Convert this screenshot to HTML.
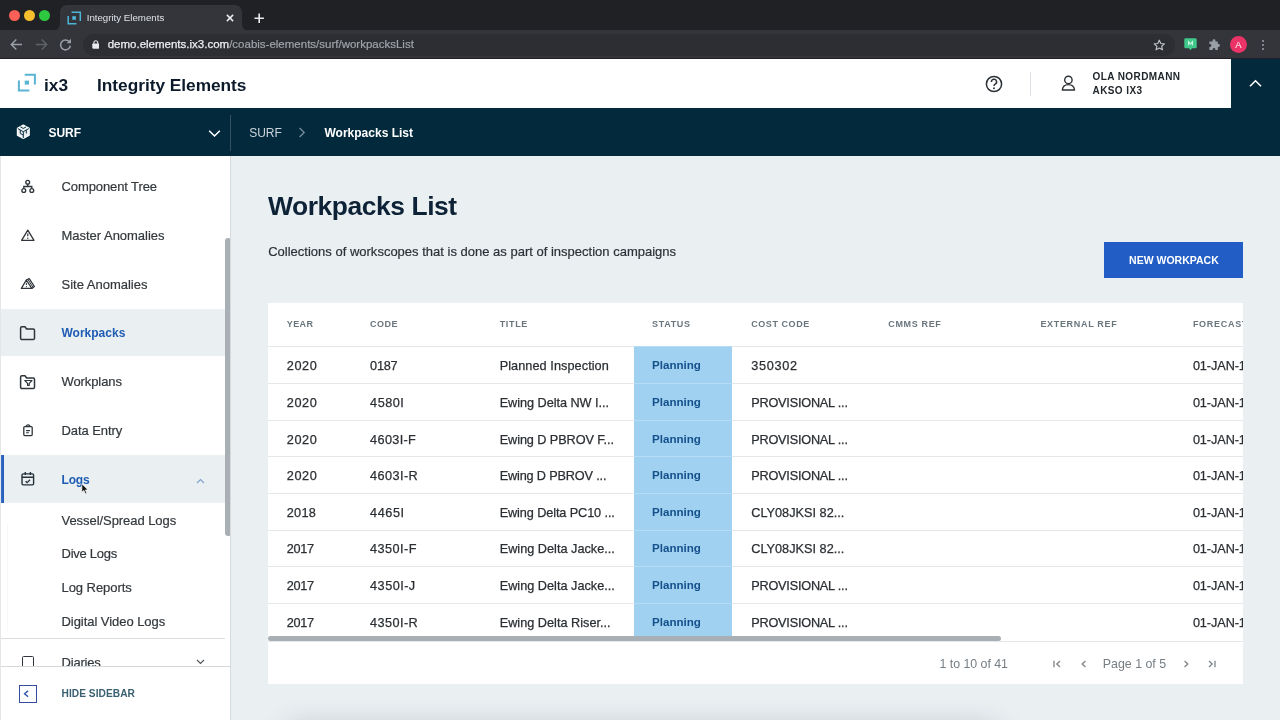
<!DOCTYPE html>
<html>
<head>
<meta charset="utf-8">
<title>Integrity Elements</title>
<style>
*{box-sizing:border-box;margin:0;padding:0}
html,body{width:1280px;height:720px;overflow:hidden;background:#eaeff2;font-family:"Liberation Sans",sans-serif;color:#2b2f33}
.abs{position:absolute}
#root{position:relative;width:1280px;height:720px;overflow:hidden;will-change:transform}
.t{position:absolute;white-space:nowrap;line-height:1}
/* chrome */
#titlebar{left:0;top:0;width:1280px;height:30px;background:#1f2125}
#tab{left:60px;top:5px;width:182px;height:26px;background:#33353a;border-radius:7px 7px 0 0}
#toolbar{left:0;top:30px;width:1280px;height:28px;background:#33353a}
#urlpill{left:83px;top:33.5px;width:1092px;height:22px;border-radius:11px;background:#2c2e33}
#chromeline{left:0;top:57.5px;width:1280px;height:1px;background:#1f2023}
/* app header */
#hdr{left:0;top:59px;width:1231px;height:49px;background:#fff}
#hdrdark{left:1231px;top:59px;width:49px;height:49px;background:#022a3c}
#nav{left:0;top:107.6px;width:1280px;height:48.1px;background:#022a3c}
/* sidebar */
#side{left:0;top:156px;width:231px;height:564px;background:#fff;overflow:hidden;border-right:1px solid #d6dadd}
.si{position:absolute;left:61.5px;font-size:13px;color:#33383c;white-space:nowrap;line-height:16px;letter-spacing:.15px}
.act{position:absolute;left:0;width:224.5px;background:#eaeff2}
/* content */
#card{left:268px;top:302px;width:975px;height:382px;overflow:hidden}
.th{font-size:9px;font-weight:bold;color:#69757d}
.td{font-size:12.7px;color:#2b2f33;-webkit-text-stroke:.25px #2b2f33}
.pl{font-size:11.6px;font-weight:bold;color:#14508c}
.pg{font-size:12.4px;color:#767e84}
.rl{left:0;width:975px;height:1px;background:#e5e8eb}
.st{left:365.7px;width:98.8px;background:#a1d1f0}
</style>
</head>
<body>
<div id="root">
<!-- ===== browser chrome ===== -->
<div id="titlebar" class="abs"></div>
<div class="abs" style="left:8.5px;top:9.5px;width:11px;height:11px;border-radius:50%;background:#fe5f57"></div>
<div class="abs" style="left:23.7px;top:9.5px;width:11px;height:11px;border-radius:50%;background:#f6bd2e"></div>
<div class="abs" style="left:39px;top:9.5px;width:11px;height:11px;border-radius:50%;background:#2dc840"></div>
<div id="tab" class="abs"></div>
<svg class="abs" style="left:52px;top:23px" width="8" height="8" viewBox="0 0 8 8"><path d="M8 0 V8 H0 C5 8 8 5 8 0Z" fill="#33353a"/></svg>
<svg class="abs" style="left:242px;top:23px" width="8" height="8" viewBox="0 0 8 8"><path d="M0 0 V8 H8 C3 8 0 5 0 0Z" fill="#33353a"/></svg>
<svg class="abs" style="left:67px;top:11px" width="15" height="14" viewBox="0 0 15 14"><g fill="none" stroke="#4db5d8" stroke-width="1.5"><path d="M4.5 1.2 H13.3 V10"/><path d="M1.2 5 V12.8 H9.5"/></g><rect x="5.3" y="5.2" width="3.6" height="3.6" fill="#4db5d8"/></svg>
<div class="t" style="left:86.7px;top:13.2px;font-size:9.7px;color:#dee1e6;letter-spacing:0">Integrity Elements</div>
<svg class="abs" style="left:225.7px;top:14.1px" width="8" height="8" viewBox="0 0 9 9"><path d="M1 1 L8 8 M8 1 L1 8" stroke="#e8eaed" stroke-width="1.7" fill="none"/></svg>
<svg class="abs" style="left:253.6px;top:12.9px" width="10.4" height="10.4" viewBox="0 0 11 11"><path d="M5.5 0.5 V10.5 M0.5 5.5 H10.5" stroke="#e8eaed" stroke-width="1.7" fill="none"/></svg>
<div id="toolbar" class="abs"></div>
<svg class="abs" style="left:10px;top:38px" width="13" height="13" viewBox="0 0 13 13"><path d="M12 6.5 H1.5 M6.3 1.5 L1.3 6.5 L6.3 11.5" stroke="#9aa0a6" stroke-width="1.5" fill="none"/></svg>
<svg class="abs" style="left:35px;top:38px" width="13" height="13" viewBox="0 0 13 13"><path d="M1 6.5 H11.5 M6.7 1.5 L11.7 6.5 L6.7 11.5" stroke="#5f6368" stroke-width="1.5" fill="none"/></svg>
<svg class="abs" style="left:58.5px;top:38px" width="13" height="13" viewBox="0 0 13 13"><path d="M10.6 4.2 A4.9 4.9 0 1 0 11.4 7.6" stroke="#9aa0a6" stroke-width="1.5" fill="none"/><path d="M7.6 5.2 H12 V0.8 Z" fill="#9aa0a6"/></svg>
<div id="urlpill" class="abs"></div>
<svg class="abs" style="left:91.8px;top:40.3px" width="7.6" height="9" viewBox="0 0 8 11" preserveAspectRatio="none"><rect x="0.3" y="4.2" width="7.4" height="6.4" rx="1" fill="#e8eaed"/><path d="M2 4.5 V3 A2 2 0 0 1 6 3 V4.5" stroke="#e8eaed" stroke-width="1.2" fill="none"/></svg>
<div class="t" style="left:107.7px;top:38.8px;font-size:11.5px;color:#a0a4a9;letter-spacing:0;-webkit-text-stroke:.2px #a0a4a9"><span style="color:#eceef0;-webkit-text-stroke:.25px #eceef0">demo.elements.ix3.com</span>/coabis-elements/surf/workpacksList</div>
<svg class="abs" style="left:1153.1px;top:39px" width="12.6" height="11.7" viewBox="0 0 14 13"><path d="M7 1.3 L8.7 5 L12.7 5.4 L9.7 8.1 L10.6 12 L7 10 L3.4 12 L4.3 8.1 L1.3 5.4 L5.3 5 Z" fill="none" stroke="#bdc1c6" stroke-width="1.3" stroke-linejoin="round"/></svg>
<svg class="abs" style="left:1183.5px;top:38.2px" width="13" height="13" viewBox="0 0 13 13"><path d="M1.6 0.3 H11.4 A1.3 1.3 0 0 1 12.7 1.6 V9 A1.3 1.3 0 0 1 11.4 10.3 H8 L6.5 12.2 L5 10.3 H1.6 A1.3 1.3 0 0 1 0.3 9 V1.6 A1.3 1.3 0 0 1 1.6 0.3Z" fill="#41c98c"/><path d="M4.6 7.2 V3.7 L6.5 6 L8.4 3.7 V7.2" fill="none" stroke="#d8f5e8" stroke-width="1.1"/></svg>
<svg class="abs" style="left:1208px;top:38.5px" width="12" height="12" viewBox="0 0 12 12"><path d="M4.6 1.6 A1.4 1.4 0 0 1 7.4 1.6 V2.4 H9.8 V5 H10.5 A1.45 1.45 0 0 1 10.5 7.9 H9.8 V10.9 H7.3 V10.2 A1.3 1.3 0 0 0 4.7 10.2 V10.9 H1.4 V7.9 H2 A1.4 1.4 0 0 0 2 5.1 H1.4 V2.4 H4.6 Z" fill="#9aa0a6"/></svg>
<div class="abs" style="left:1229.7px;top:35.8px;width:17.6px;height:17.6px;border-radius:50%;background:#ea3366"></div>
<div class="t" style="left:1234.5px;top:40.2px;font-size:9.5px;color:#fff;width:8px;text-align:center">A</div>
<div class="abs" style="left:1261.6px;top:39.8px;width:2.4px;height:2.4px;border-radius:50%;background:#9aa0a6;box-shadow:0 4px 0 #9aa0a6,0 8px 0 #9aa0a6"></div>
<div id="chromeline" class="abs"></div>

<!-- ===== app header ===== -->
<div id="hdr" class="abs"></div>
<div id="hdrdark" class="abs"></div>
<svg class="abs" style="left:17px;top:73px" width="20" height="19" viewBox="0 0 20 19"><g fill="none" stroke="#5ab4d4" stroke-width="2"><path d="M7.7 1.7 H17.9 V11.6"/><path d="M1.9 7.6 V17.5 H12.4"/></g><rect x="7.7" y="7.6" width="4.3" height="4" fill="#5ab4d4"/></svg>
<div class="t" style="left:44px;top:76.9px;font-size:17.3px;font-weight:bold;color:#0c1a2b">ix3</div>
<div class="t" style="left:97px;top:76.9px;font-size:17.3px;font-weight:bold;color:#0c1a2b;letter-spacing:-.02px">Integrity Elements</div>
<svg class="abs" style="left:984px;top:73.5px" width="20" height="20" viewBox="0 0 20 20"><circle cx="10" cy="10" r="7.6" fill="none" stroke="#2d3237" stroke-width="1.5"/><path d="M7.4 8 A2.6 2.6 0 1 1 11.2 10.2 C10.3 10.7 10 11.1 10 12.1" fill="none" stroke="#2d3237" stroke-width="1.5"/><circle cx="10" cy="14.3" r="0.95" fill="#2d3237"/></svg>
<div class="abs" style="left:1030.4px;top:72px;width:1px;height:23.5px;background:#dcdfe3"></div>
<svg class="abs" style="left:1060px;top:74px" width="17" height="18" viewBox="0 0 17 18"><circle cx="8.4" cy="5.9" r="3.7" fill="none" stroke="#2d3237" stroke-width="1.4"/><path d="M2.3 16 C2.6 12.6 4.6 10.6 8.4 10.6 C12.2 10.6 14.2 12.6 14.5 16 Z" fill="none" stroke="#2d3237" stroke-width="1.4" stroke-linejoin="round"/></svg>
<div class="t" style="left:1092.5px;top:72.4px;font-size:10px;font-weight:bold;color:#22272b;letter-spacing:.42px">OLA NORDMANN</div>
<div class="t" style="left:1092.5px;top:86.1px;font-size:10px;font-weight:bold;color:#22272b;letter-spacing:.42px">AKSO IX3</div>
<svg class="abs" style="left:1249px;top:79px" width="13" height="9" viewBox="0 0 13 9"><path d="M1 7.2 L6.5 1.8 L12 7.2" fill="none" stroke="#fff" stroke-width="1.6"/></svg>
<div id="nav" class="abs"></div>
<svg class="abs" style="left:16.3px;top:124.2px" width="14.6" height="15.5" viewBox="0 0 15 16"><path d="M7.5 1 L13.6 4.5 V11.5 L7.5 15 L1.4 11.5 V4.5 Z" fill="#e9eef1" stroke="#fff" stroke-width="1.2" stroke-linejoin="round"/><path d="M1.8 4.7 L7.5 8 L13.2 4.7 M7.5 8 V14.6 M4.4 6.3 V9.8 L7.5 11.4 M10.6 6.3 V9.8 M4.5 2.9 L7.5 4.6 L10.5 2.9" fill="none" stroke="#022a3c" stroke-width="1"/></svg>
<div class="t" style="left:48.4px;top:126.8px;font-size:12px;font-weight:bold;color:#fff">SURF</div>
<svg class="abs" style="left:207.5px;top:128.5px" width="13" height="9" viewBox="0 0 13 9"><path d="M1.2 1.8 L6.5 7 L11.8 1.8" fill="none" stroke="#fff" stroke-width="1.6"/></svg>
<div class="abs" style="left:229.5px;top:114.5px;width:1.3px;height:36px;background:#35505f"></div>
<div class="t" style="left:249.2px;top:126.8px;font-size:12px;color:#ccd5db">SURF</div>
<svg class="abs" style="left:298px;top:127px" width="8" height="11" viewBox="0 0 8 11"><path d="M1.6 1 L6.2 5.5 L1.6 10" fill="none" stroke="#7d929e" stroke-width="1.2"/></svg>
<div class="t" style="left:324.5px;top:126.8px;font-size:12px;font-weight:bold;color:#fff">Workpacks List</div>

<!-- ===== sidebar ===== -->
<div id="side" class="abs">
<div class="abs" style="left:6.5px;top:369px;width:1px;height:106px;background:#f6f7f9"></div>
<div class="act" style="top:153px;height:47px"></div>
<div class="act" style="top:299px;height:48px"></div>
<div class="abs" style="left:0;top:299px;width:3.8px;height:48px;background:linear-gradient(90deg,#3f7ad2,#2458b6)"></div>
<div class="t" style="left:61.5px;top:24.25px;font-size:13px;color:#33383c;-webkit-text-stroke:.2px #33383c;letter-spacing:-0.1px">Component Tree</div>
<div class="t" style="left:61.5px;top:73.0px;font-size:13px;color:#33383c;-webkit-text-stroke:.2px #33383c;letter-spacing:-0.02px">Master Anomalies</div>
<div class="t" style="left:61.5px;top:121.75px;font-size:13px;color:#33383c;-webkit-text-stroke:.2px #33383c">Site Anomalies</div>
<div class="t" style="left:61.5px;top:219.25px;font-size:13px;color:#33383c;-webkit-text-stroke:.2px #33383c;letter-spacing:-0.09px">Workplans</div>
<div class="t" style="left:61.5px;top:268.0px;font-size:13px;color:#33383c;-webkit-text-stroke:.2px #33383c;letter-spacing:-0.07px">Data Entry</div>
<div class="t" style="left:61.5px;top:357.6px;font-size:13px;color:#33383c;-webkit-text-stroke:.2px #33383c;letter-spacing:-0.055px">Vessel/Spread Logs</div>
<div class="t" style="left:61.5px;top:391.25px;font-size:13px;color:#33383c;-webkit-text-stroke:.2px #33383c;letter-spacing:-0.26px">Dive Logs</div>
<div class="t" style="left:61.5px;top:424.75px;font-size:13px;color:#33383c;-webkit-text-stroke:.2px #33383c;letter-spacing:-0.06px">Log Reports</div>
<div class="t" style="left:61.5px;top:458.5px;font-size:13px;color:#33383c;-webkit-text-stroke:.2px #33383c;letter-spacing:-0.05px">Digital Video Logs</div>
<div class="t" style="left:61.5px;top:499.6px;font-size:13px;color:#33383c;-webkit-text-stroke:.2px #33383c;letter-spacing:-0.2px">Diaries</div>
<div class="t" style="left:61.5px;top:171.34px;font-size:12px;font-weight:bold;color:#1f5cb4">Workpacks</div>
<div class="t" style="left:61.5px;top:317.59px;font-size:12px;font-weight:bold;color:#1f5cb4;letter-spacing:-.2px">Logs</div>
<svg class="abs" style="left:20px;top:23px" width="16" height="16" viewBox="0 0 16 16"><g fill="none" stroke="#2f353a" stroke-width="1.35"><circle cx="7.7" cy="3.3" r="1.9"/><circle cx="3.8" cy="11.5" r="1.9"/><circle cx="11.8" cy="11.5" r="1.9"/><path d="M7.7 5.2 V7.5 M3.8 9.6 V7.5 H11.8 V9.6"/></g></svg>
<svg class="abs" style="left:20px;top:72px" width="16" height="14" viewBox="0 0 16 14"><path d="M7.8 2.2 L14 12.3 H1.6 Z" fill="none" stroke="#2f353a" stroke-width="1.3" stroke-linejoin="round"/><path d="M7.8 5.6 V8.3" stroke="#2f353a" stroke-width="1.2"/><circle cx="7.8" cy="10.2" r="0.7" fill="#2f353a"/></svg>
<svg class="abs" style="left:20px;top:121px" width="16" height="14" viewBox="0 0 16 14"><g fill="none" stroke="#2f353a" stroke-width="1.3" stroke-linejoin="round"><path d="M6.3 3 L11.8 11.4 H1.4 Z"/><path d="M6.3 3 L9.2 1.6 L14.4 9.5 L11.8 11.4"/><path d="M7.9 2.4 L13 10.3" stroke-width="1"/></g><path d="M6.4 5.8 V8" stroke="#2f353a" stroke-width="1"/><circle cx="6.4" cy="9.6" r="0.6" fill="#2f353a"/></svg>
<svg class="abs" style="left:18.9px;top:169.2px" width="17" height="16" viewBox="0 0 17 16"><path d="M1.6 3 A1.3 1.3 0 0 1 2.9 1.7 H6 L7.6 4 H14.2 A1.3 1.3 0 0 1 15.5 5.3 V13.2 A1.3 1.3 0 0 1 14.2 14.5 H2.9 A1.3 1.3 0 0 1 1.6 13.2 Z" fill="none" stroke="#2f353a" stroke-width="1.5" stroke-linejoin="round"/></svg>
<svg class="abs" style="left:18.9px;top:218px" width="17" height="16" viewBox="0 0 17 16"><path d="M1.6 3 A1.3 1.3 0 0 1 2.9 1.7 H6 L7.6 4 H14.2 A1.3 1.3 0 0 1 15.5 5.3 V13.2 A1.3 1.3 0 0 1 14.2 14.5 H2.9 A1.3 1.3 0 0 1 1.6 13.2 Z" fill="none" stroke="#2f353a" stroke-width="1.5" stroke-linejoin="round"/><path d="M5.8 6.5 H13 L10.2 9.3 V11.5 H8.6 V9.3 Z" fill="none" stroke="#2f353a" stroke-width="1.2" stroke-linejoin="round"/></svg>
<svg class="abs" style="left:22px;top:267.5px" width="12" height="14" viewBox="0 0 12 14"><rect x="1.8" y="2.6" width="8.4" height="9" rx="1" fill="none" stroke="#2f353a" stroke-width="1.3"/><path d="M4.2 2.8 A1.9 1.9 0 0 1 8 2.8" fill="none" stroke="#2f353a" stroke-width="1.3"/><path d="M4.1 6.6 H7.9 M4.1 8.7 H6.9" stroke="#2f353a" stroke-width="1.1"/></svg>
<svg class="abs" style="left:20px;top:315px" width="16" height="16" viewBox="0 0 16 16"><g fill="none" stroke="#25323d" stroke-width="1.4"><rect x="2" y="2.9" width="11.6" height="11" rx="1.3"/><path d="M2 6.2 H13.6 M5.3 0.9 V4 M10.4 0.9 V4"/><path d="M5.6 10.2 L7.1 11.6 L10 8.8" stroke-width="1.3"/></g></svg>
<svg class="abs" style="left:195.5px;top:322px" width="9" height="6" viewBox="0 0 9 6"><path d="M1 5 L4.5 1.5 L8 5" fill="none" stroke="#7fa0cf" stroke-width="1.1"/></svg>
<svg class="abs" style="left:195.5px;top:502.5px" width="9" height="6" viewBox="0 0 9 6"><path d="M1 1 L4.5 4.5 L8 1" fill="none" stroke="#4a5157" stroke-width="1.1"/></svg>
<div class="abs" style="left:0;top:481.6px;width:224.5px;height:1px;background:#d9dde0"></div>
<div class="abs" style="left:22px;top:500px;width:11.6px;height:14px;border:1.3px solid #2f353a;border-radius:1.5px"></div>
<div class="abs" style="left:224.5px;top:81.5px;width:6px;height:298px;border-radius:3px;background:#a8b0b6"></div>
<div class="abs" style="left:0;top:509.5px;width:231px;height:55px;background:#fff;border-top:1px solid #d5d9dc"></div>
<div class="abs" style="left:18.9px;top:529px;width:18px;height:18px;border:1.5px solid #344da0"></div>
<svg class="abs" style="left:22.9px;top:534.3px" width="6.8" height="7.6" viewBox="0 0 8 9"><path d="M6 1 L1.8 4.5 L6 8" fill="none" stroke="#2e55ad" stroke-width="1.7"/></svg>
<div class="t" style="left:61.5px;top:532.57px;font-size:10.2px;font-weight:bold;color:#3b6072;letter-spacing:.04px">HIDE SIDEBAR</div>
<div class="abs" style="left:0;top:0;width:1px;height:564px;background:#e4e6e8"></div>
<svg class="abs" style="left:80.8px;top:327px" width="8.4" height="11.8" viewBox="0 0 10 14"><path d="M1 0.8 V11 L3.5 8.8 L5.2 12.8 L6.9 12.1 L5.2 8.2 H8.4 Z" fill="#111" stroke="#fff" stroke-width="0.8"/></svg>
</div>

<!-- ===== content ===== -->
<div class="t" style="left:268px;top:192.85px;font-size:26.4px;font-weight:bold;color:#0d2236;letter-spacing:-.42px">Workpacks List</div>
<div class="t" style="left:268.2px;top:244.8px;font-size:13px;color:#2b3137;letter-spacing:.005px;-webkit-text-stroke:.2px #2b3137">Collections of workscopes that is done as part of inspection campaigns</div>
<div class="abs" style="left:1104.3px;top:242.4px;width:138.7px;height:36.1px;background:#215dc4"></div>
<div class="t" style="left:1129.1px;top:254.86px;font-size:10.5px;font-weight:bold;color:#fff;letter-spacing:0">NEW WORKPACK</div>
<div class="abs" style="left:288px;top:730px;width:708px;height:30px;border-radius:6px;background:#888;box-shadow:0 0 30px 0 rgba(40,45,70,.3)"></div>
<div id="card" class="abs">
<div class="abs" style="left:0;top:.5px;width:975px;height:381.5px;background:#fff"></div>
<div class="t th" style="left:18.75px;top:17.88px;letter-spacing:0.41px">YEAR</div>
<div class="t th" style="left:102.10px;top:17.88px;letter-spacing:0.49px">CODE</div>
<div class="t th" style="left:231.70px;top:17.88px;letter-spacing:0.65px">TITLE</div>
<div class="t th" style="left:384.10px;top:17.88px;letter-spacing:0.65px">STATUS</div>
<div class="t th" style="left:483.25px;top:17.88px;letter-spacing:0.56px">COST CODE</div>
<div class="t th" style="left:620.30px;top:17.88px;letter-spacing:0.64px">CMMS REF</div>
<div class="t th" style="left:772.40px;top:17.88px;letter-spacing:0.68px">EXTERNAL REF</div>
<div class="t th" style="left:924.90px;top:17.88px;letter-spacing:0.71px">FORECAST</div>
<div class="abs rl" style="top:43.75px"></div>
<div class="abs st" style="top:43.75px;height:37.15px;border-top:1px solid #b6dbf4"></div>
<div class="t td" style="left:18.75px;top:58.00px;letter-spacing:0.59px">2020</div>
<div class="t td" style="left:102.10px;top:58.00px;letter-spacing:-0.24px">0187</div>
<div class="t td" style="left:231.70px;top:58.00px;letter-spacing:0.07px">Planned Inspection</div>
<div class="t td" style="left:483.25px;top:58.00px;letter-spacing:0.69px">350302</div>
<div class="t pl" style="left:384.10px;top:57.00px;letter-spacing:-0.04px">Planning</div>
<div class="t td" style="left:924.90px;top:58.00px;letter-spacing:-0.08px">01-JAN-19</div>
<div class="abs rl" style="top:80.90px"></div>
<div class="abs st" style="top:80.90px;height:36.80px;border-top:1px solid #b6dbf4"></div>
<div class="t td" style="left:18.75px;top:95.00px;letter-spacing:0.59px">2020</div>
<div class="t td" style="left:102.10px;top:95.00px;letter-spacing:0.51px">4580I</div>
<div class="t td" style="left:231.70px;top:95.00px;letter-spacing:-0.04px">Ewing Delta NW I...</div>
<div class="t td" style="left:483.25px;top:95.00px;letter-spacing:-0.21px">PROVISIONAL ...</div>
<div class="t pl" style="left:384.10px;top:94.00px;letter-spacing:-0.04px">Planning</div>
<div class="t td" style="left:924.90px;top:95.00px;letter-spacing:-0.08px">01-JAN-19</div>
<div class="abs rl" style="top:117.70px"></div>
<div class="abs st" style="top:117.70px;height:36.70px;border-top:1px solid #b6dbf4"></div>
<div class="t td" style="left:18.75px;top:132.00px;letter-spacing:0.59px">2020</div>
<div class="t td" style="left:102.10px;top:132.00px;letter-spacing:0.34px">4603I-F</div>
<div class="t td" style="left:231.70px;top:132.00px;letter-spacing:-0.08px">Ewing D PBROV F...</div>
<div class="t td" style="left:483.25px;top:132.00px;letter-spacing:-0.21px">PROVISIONAL ...</div>
<div class="t pl" style="left:384.10px;top:131.00px;letter-spacing:-0.04px">Planning</div>
<div class="t td" style="left:924.90px;top:132.00px;letter-spacing:-0.08px">01-JAN-19</div>
<div class="abs rl" style="top:154.40px"></div>
<div class="abs st" style="top:154.40px;height:36.70px;border-top:1px solid #b6dbf4"></div>
<div class="t td" style="left:18.75px;top:168.00px;letter-spacing:0.59px">2020</div>
<div class="t td" style="left:102.10px;top:168.00px;letter-spacing:0.41px">4603I-R</div>
<div class="t td" style="left:231.70px;top:168.00px;letter-spacing:-0.16px">Ewing D PBROV ...</div>
<div class="t td" style="left:483.25px;top:168.00px;letter-spacing:-0.21px">PROVISIONAL ...</div>
<div class="t pl" style="left:384.10px;top:167.00px;letter-spacing:-0.04px">Planning</div>
<div class="t td" style="left:924.90px;top:168.00px;letter-spacing:-0.08px">01-JAN-19</div>
<div class="abs rl" style="top:191.10px"></div>
<div class="abs st" style="top:191.10px;height:36.50px;border-top:1px solid #b6dbf4"></div>
<div class="t td" style="left:18.75px;top:205.00px;letter-spacing:0.26px">2018</div>
<div class="t td" style="left:102.10px;top:205.00px;letter-spacing:0.54px">4465I</div>
<div class="t td" style="left:231.70px;top:205.00px;letter-spacing:-0.10px">Ewing Delta PC10 ...</div>
<div class="t td" style="left:483.25px;top:205.00px;letter-spacing:0.02px">CLY08JKSI 82...</div>
<div class="t pl" style="left:384.10px;top:204.00px;letter-spacing:-0.04px">Planning</div>
<div class="t td" style="left:924.90px;top:205.00px;letter-spacing:-0.08px">01-JAN-19</div>
<div class="abs rl" style="top:227.60px"></div>
<div class="abs st" style="top:227.60px;height:36.50px;border-top:1px solid #b6dbf4"></div>
<div class="t td" style="left:18.75px;top:241.00px;letter-spacing:-0.31px">2017</div>
<div class="t td" style="left:102.10px;top:241.00px;letter-spacing:0.43px">4350I-F</div>
<div class="t td" style="left:231.70px;top:241.00px;letter-spacing:0.01px">Ewing Delta Jacke...</div>
<div class="t td" style="left:483.25px;top:241.00px;letter-spacing:0.02px">CLY08JKSI 82...</div>
<div class="t pl" style="left:384.10px;top:240.00px;letter-spacing:-0.04px">Planning</div>
<div class="t td" style="left:924.90px;top:241.00px;letter-spacing:-0.08px">01-JAN-19</div>
<div class="abs rl" style="top:264.10px"></div>
<div class="abs st" style="top:264.10px;height:36.50px;border-top:1px solid #b6dbf4"></div>
<div class="t td" style="left:18.75px;top:278.00px;letter-spacing:-0.31px">2017</div>
<div class="t td" style="left:102.10px;top:278.00px;letter-spacing:0.46px">4350I-J</div>
<div class="t td" style="left:231.70px;top:278.00px;letter-spacing:0.01px">Ewing Delta Jacke...</div>
<div class="t td" style="left:483.25px;top:278.00px;letter-spacing:-0.21px">PROVISIONAL ...</div>
<div class="t pl" style="left:384.10px;top:277.00px;letter-spacing:-0.04px">Planning</div>
<div class="t td" style="left:924.90px;top:278.00px;letter-spacing:-0.08px">01-JAN-19</div>
<div class="abs rl" style="top:300.60px"></div>
<div class="abs st" style="top:300.60px;height:36.40px;border-top:1px solid #b6dbf4"></div>
<div class="t td" style="left:18.75px;top:315.00px;letter-spacing:-0.31px">2017</div>
<div class="t td" style="left:102.10px;top:315.00px;letter-spacing:0.41px">4350I-R</div>
<div class="t td" style="left:231.70px;top:315.00px;letter-spacing:0.01px">Ewing Delta Riser...</div>
<div class="t td" style="left:483.25px;top:315.00px;letter-spacing:-0.21px">PROVISIONAL ...</div>
<div class="t pl" style="left:384.10px;top:314.00px;letter-spacing:-0.04px">Planning</div>
<div class="t td" style="left:924.90px;top:315.00px;letter-spacing:-0.08px">01-JAN-19</div>
<div class="abs" style="left:0;top:336.50px;width:975px;height:46px;background:#fff"></div>
<div class="abs" style="left:0;top:339.30px;width:975px;height:1px;background:#e3e7ea"></div>
<div class="abs" style="left:0;top:333.60px;width:733px;height:5.6px;border-radius:3px;background:#a8b0b6"></div>
<div class="t pg" style="left:671.60px;top:355.50px;letter-spacing:-0.04px">1 to 10 of 41</div>
<div class="t pg" style="left:834.80px;top:355.50px;letter-spacing:-0.01px">Page 1 of 5</div>
<svg class="abs" style="left:784.20px;top:356.60px" width="10" height="10" viewBox="0 0 10 10"><path d="M2 1.8 V8.2 M8 2 L4.8 5 L8 8" fill="none" stroke="#7d848a" stroke-width="1.3"/></svg>
<svg class="abs" style="left:810.70px;top:356.60px" width="10" height="10" viewBox="0 0 10 10"><path d="M6.4 2 L3.2 5 L6.4 8" fill="none" stroke="#7d848a" stroke-width="1.3"/></svg>
<svg class="abs" style="left:912.60px;top:356.60px" width="10" height="10" viewBox="0 0 10 10"><path d="M3.6 2 L6.8 5 L3.6 8" fill="none" stroke="#7d848a" stroke-width="1.3"/></svg>
<svg class="abs" style="left:938.70px;top:356.60px" width="10" height="10" viewBox="0 0 10 10"><path d="M8 1.8 V8.2 M2 2 L5.2 5 L2 8" fill="none" stroke="#7d848a" stroke-width="1.3"/></svg>
</div>
</div>
</body>
</html>
